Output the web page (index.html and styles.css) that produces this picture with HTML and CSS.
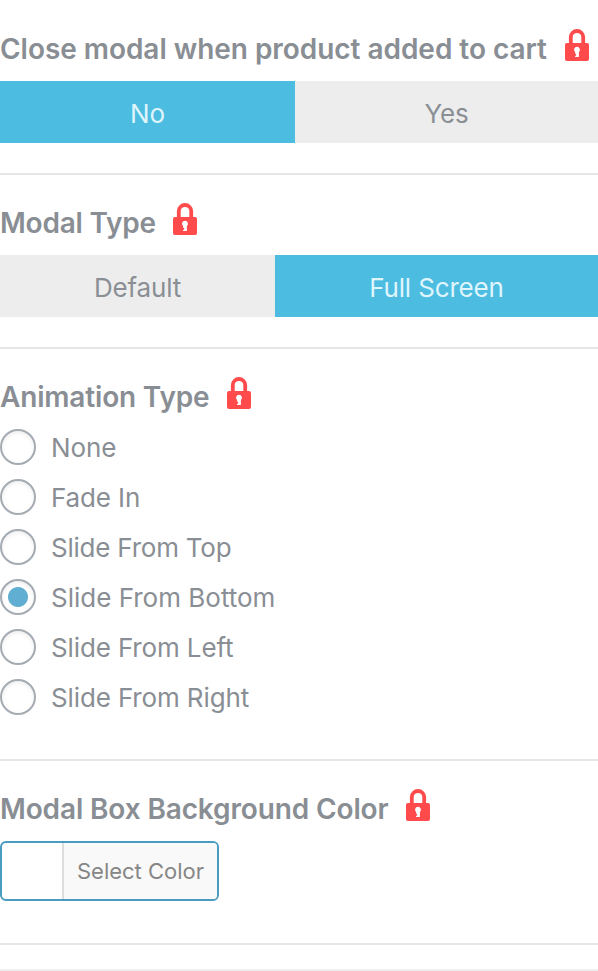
FILE: index.html
```html
<!DOCTYPE html>
<html lang="en"><head><meta charset="utf-8"><title>Modal settings</title><link rel="stylesheet" href="styles.css"></head>
<body>
<svg class="defs"><symbol id="lock" viewBox="0 0 26 34"><path d="M6.8 15V8a6.2 6 0 0 1 12.4 0V15" fill="none" stroke="currentColor" stroke-width="3.8"/><rect x="1" y="14" width="24" height="18" rx="2" fill="currentColor"/><path d="M13 17.8a3 3 0 0 1 1.9 5.3V28h-3.8v-1.2h1v-2h-1v-1.7a3 3 0 0 1 1.9-5.3z" fill="#fff"/></symbol></svg>
<section class="field first"><h3 class="title"><span class="t1">Close modal when product added to cart</span><svg class="lock"><use href="#lock"/></svg></h3>
<div class="switch close"><span class="option active">No</span><span class="option">Yes</span></div></section>
<section class="field"><h3 class="title"><span class="t2">Modal Type</span><svg class="lock"><use href="#lock"/></svg></h3>
<div class="switch type"><span class="option">Default</span><span class="option active">Full Screen</span></div></section>
<section class="field animation"><h3 class="title"><span class="t3">Animation Type</span><svg class="lock"><use href="#lock"/></svg></h3>
<div class="radios">
<label class="radio"><i class="dot"></i>None</label>
<label class="radio"><i class="dot"></i>Fade In</label>
<label class="radio top"><i class="dot"></i>Slide From Top</label>
<label class="radio bottom"><i class="dot checked"></i>Slide From Bottom</label>
<label class="radio"><i class="dot"></i>Slide From Left</label>
<label class="radio"><i class="dot"></i>Slide From Right</label>
</div></section>
<section class="field color"><h3 class="title"><span class="t4">Modal Box Background Color</span><svg class="lock"><use href="#lock"/></svg></h3>
<button class="picker"><span class="swatch"></span><span class="label">Select Color</span></button></section>
<div class="end"></div>
</body></html>
```
FILE: styles.css
```css
* { box-sizing: border-box; }
body { margin: 0; background: #fff; color: #898e94; font-family: Inter, sans-serif; overflow: hidden; }
.defs { display: none; }
.field { height: 174px; padding-top: 27px; border-bottom: 2px solid #e6e6e6; }
.first { height: 175px; padding-top: 28px; }
.animation { height: 412px; }
.color { height: 184px; }
.title { display: flex; height: 53px; margin: 0; font-size: 28px; line-height: 43px; font-weight: 600; white-space: nowrap; }
.title span { flex: none; }
.t1 { width: 564px; letter-spacing: -0.04px; }
.t2 { width: 172px; letter-spacing: -0.22px; }
.t3 { width: 226px; letter-spacing: -0.17px; }
.t4 { width: 405px; letter-spacing: -0.13px; }
.lock { width: 26px; height: 34px; margin-top: 1px; color: #ff4b4b; flex: none; }
.switch { display: grid; height: 62px; font-size: 26px; line-height: 66px; text-align: center; letter-spacing: -0.15px; }
.close { grid-template-columns: 295px 303px; }
.type { grid-template-columns: 275px 323px; }
.option { height: 62px; background: #ededed; color: #8a8f95; }
.active { background: #4dbce1; color: #dff5fc; }
.radios { margin-top: -7px; }
.radio { display: flex; align-items: center; height: 50px; font-size: 26px; letter-spacing: -0.13px; }
.top { letter-spacing: -0.23px; }
.bottom { letter-spacing: 0; }
.dot { width: 36px; height: 36px; margin-right: 15px; border: 2px solid #a4abb2; border-radius: 50%; box-shadow: inset 0 2px 4px #0001; }
.checked { background: radial-gradient(circle, #60afd2 9.5px, transparent 10.5px); }
.picker { display: flex; width: 219px; height: 60px; padding: 0; border: 2px solid #4a9bc0; border-radius: 6px; background: #fff; overflow: hidden; }
.swatch { width: 60px; }
.label { flex: 1; border-left: 2px solid #ddd; background: #f9f9f9; color: #868686; font: 22px/57px Inter, sans-serif; }
.end { height: 26px; border-bottom: 2px solid #eee; }
```
